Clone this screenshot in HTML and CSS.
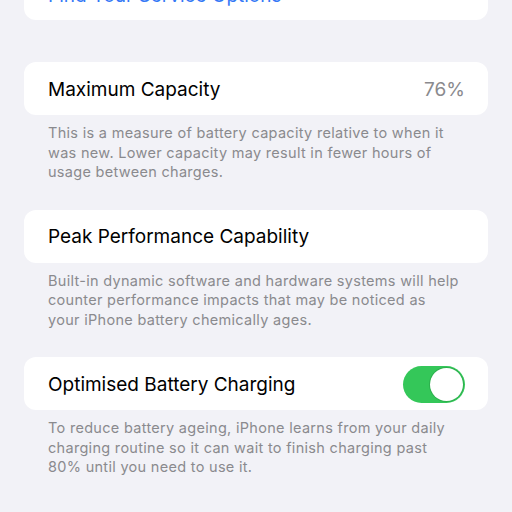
FILE: index.html
```html
<!DOCTYPE html>
<html>
<head>
<meta charset="utf-8">
<link rel="stylesheet" href="styles.css">
</head>
<body>
<div class="page">
  <div class="card top-card"><span class="link">Find Your Service Options</span></div>

  <div class="card row first"><span class="label">Maximum Capacity</span><span class="value">76%</span></div>
  <p class="footer">This is a measure of battery capacity relative to when it was new. Lower capacity may result in fewer hours of usage between charges.</p>

  <div class="card row"><span class="label">Peak Performance Capability</span></div>
  <p class="footer">Built-in dynamic software and hardware systems will help counter performance impacts that may be noticed as your iPhone battery chemically ages.</p>

  <div class="card row toggle-row"><span class="label">Optimised Battery Charging</span><span class="switch"><span class="knob"></span></span></div>
  <p class="footer">To reduce battery ageing, iPhone learns from your daily charging routine so it can wait to finish charging past 80% until you need to use it.</p>
</div>
</body>
</html>
```

FILE: styles.css
```css
html, body {
  margin: 0;
  padding: 0;
  background: #f2f2f7;
  height: 100%;
  overflow: hidden;
}
.page {
  padding: 0 24px;
  font-family: Inter, "Liberation Sans", sans-serif;
}
.card {
  background: #ffffff;
  border-radius: 12px;
  display: flex;
  align-items: center;
  padding: 0 24px;
}
.top-card {
  height: 50px;
  margin-top: -30px;
  margin-bottom: 42px;
}
.link {
  color: #3478f6;
  font-size: 19px;
}
.row {
  height: 53px;
  justify-content: space-between;
  padding-top: 1px;
  box-sizing: border-box;
}
.toggle-row {
  padding-right: 23px;
}
.label {
  font-size: 19px;
  color: #000;
}
.value {
  font-size: 19px;
  color: #8a8a8e;
  margin-right: -1px;
}
.footer {
  margin: 0;
  padding: 8px 27px 28px 24px;
  font-size: 14.5px;
  letter-spacing: 0.3px;
  line-height: 19.5px;
  color: #8a8a8e;
}
.switch {
  width: 62px;
  height: 37px;
  border-radius: 19px;
  background: #34c759;
  display: flex;
  align-items: center;
  justify-content: flex-end;
  padding: 0 2px;
  box-sizing: border-box;
}
.knob {
  width: 33px;
  height: 33px;
  border-radius: 50%;
  background: #fff;
  box-shadow: 0 0 0 1px rgba(40, 160, 70, 0.6);
}
```
